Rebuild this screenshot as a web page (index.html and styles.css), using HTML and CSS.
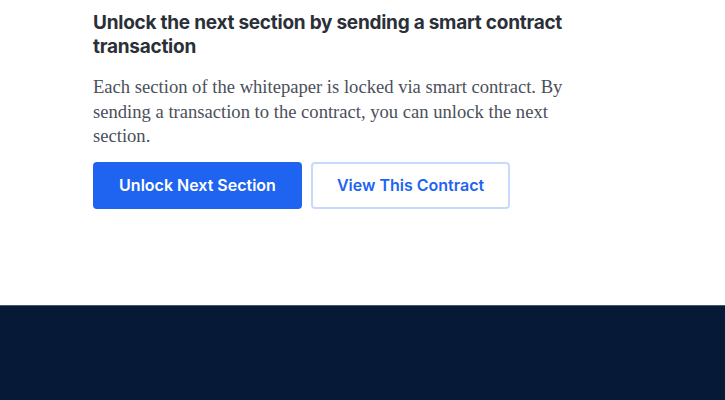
FILE: index.html
```html
<!DOCTYPE html>
<html>
<head>
<meta charset="utf-8">
<link rel="stylesheet" href="styles.css">
</head>
<body>
<main class="content">
  <h2 class="title">Unlock the next section by sending a smart contract transaction</h2>
  <p class="desc">Each section of the whitepaper is locked via smart contract. By sending a transaction to the contract, you can unlock the next section.</p>
  <div class="actions">
    <button class="btn btn-primary">Unlock Next Section</button>
    <button class="btn btn-outline">View This Contract</button>
  </div>
</main>
<footer class="footer"></footer>
</body>
</html>
```
FILE: styles.css
```css
html, body {
  margin: 0;
  padding: 0;
  background: #ffffff;
}
.content {
  padding: 11px 0 0 93px;
  height: 296px;
  box-sizing: border-box;
}
.title {
  margin: 0;
  width: 480px;
  font-family: Inter, "Noto Sans", sans-serif;
  font-size: 19px;
  font-weight: 700;
  line-height: 24px;
  color: #2b2f38;
  letter-spacing: -0.25px;
}
.desc {
  margin: 16px 0 0;
  width: 480px;
  font-family: "Liberation Serif", serif;
  font-size: 18.6px;
  line-height: 24.5px;
  color: #4b505b;
}
.actions {
  display: flex;
  gap: 9px;
  margin-top: 13px;
}
.btn {
  height: 47px;
  border-radius: 4px;
  font-family: Inter, "Noto Sans", sans-serif;
  font-size: 16px;
  font-weight: 600;
  box-sizing: border-box;
  padding: 0;
}
.btn-primary {
  width: 209px;
  background: #1f64f0;
  color: #ffffff;
  border: none;
}
.btn-outline {
  width: 199px;
  background: #ffffff;
  color: #1f64f0;
  border: 2px solid #c8dafc;
}
.footer {
  height: 104px;
  margin-top: 9px;
  background: #061a37;
  border-top: 1px solid #4a5568;
}
```
